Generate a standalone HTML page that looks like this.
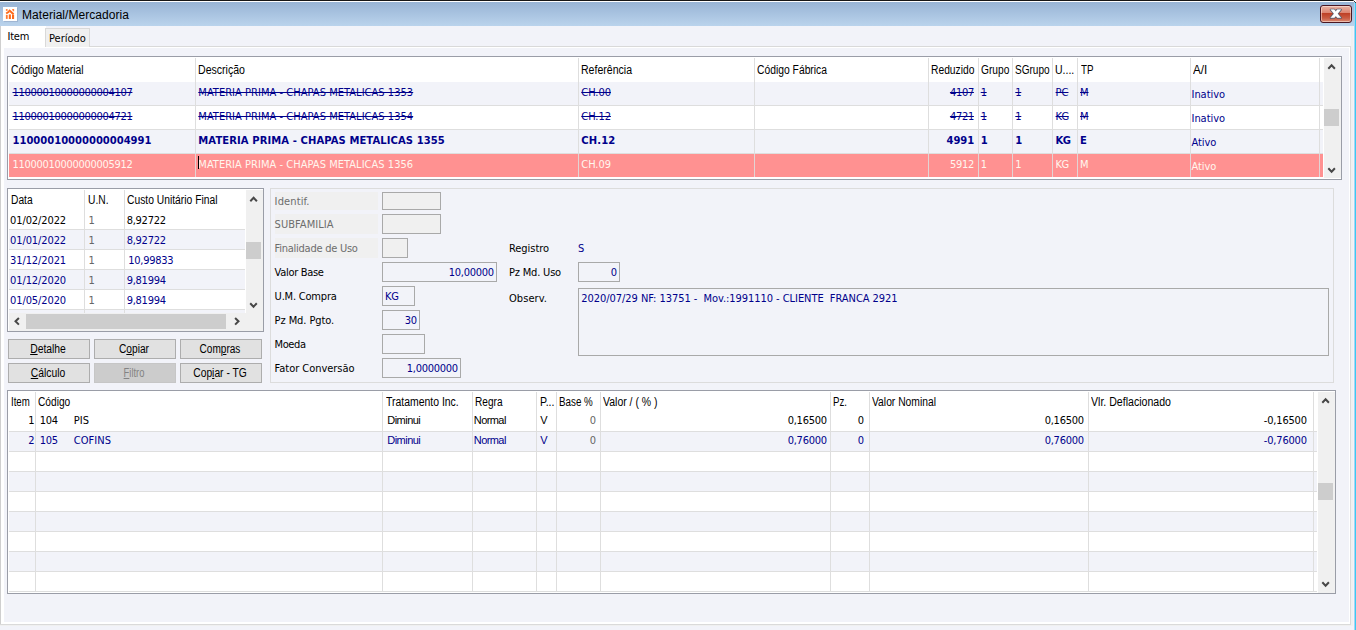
<!DOCTYPE html>
<html><head><meta charset="utf-8"><title>Material/Mercadoria</title><style>
html,body{margin:0;padding:0;background:#f2f3f9;}
#w{position:relative;width:1356px;height:630px;overflow:hidden;background:#f2f3f9;font-family:"Liberation Sans",sans-serif;font-size:11px;}
#w div,#w span,#w svg{position:absolute;}
#w span u{position:static;}
.t{white-space:nowrap;line-height:12px;}
.fh{font-family:"Liberation Sans",sans-serif;font-size:12px;}
.fd{font-family:"DejaVu Sans Condensed","Liberation Sans",sans-serif;font-size:11px;}
.fb{font-family:"DejaVu Sans","Liberation Sans",sans-serif;font-size:10px;font-weight:bold;}
.fc{font-family:"Liberation Sans",sans-serif;font-size:11px;}
.ft{font-family:"Liberation Sans",sans-serif;font-size:12px;line-height:14px;}
.s{text-decoration:line-through;}
</style></head><body><div id="w">
<div style="left:0px;top:0px;width:1353px;height:1px;background:#161616;"></div>
<div style="left:1353px;top:0px;width:1px;height:1px;background:#6a6a6a;"></div>
<div style="left:1354px;top:1px;width:1px;height:1px;background:#3a3a3a;"></div>
<div style="left:1355px;top:2px;width:1px;height:1px;background:#3a3a3a;"></div>
<div style="left:1354px;top:0px;width:2px;height:1px;background:#fff;"></div>
<div style="left:1355px;top:1px;width:1px;height:1px;background:#fff;"></div>
<div style="left:0px;top:1px;width:1354px;height:1px;background:#ffffff;"></div>
<div style="left:0px;top:2px;width:1354px;height:24px;background:linear-gradient(#98b4d5,#bad3ec);"></div>
<div style="left:0px;top:26px;width:1px;height:599px;background:#cfcfcf;"></div>
<div style="left:1px;top:26px;width:3px;height:598px;background:#ffffff;"></div>
<div style="left:1px;top:622px;width:1349px;height:2px;background:#ffffff;"></div>
<div style="left:0px;top:624px;width:1351px;height:1px;background:#dadada;"></div>
<div style="left:0px;top:625px;width:1353px;height:1px;background:#f0f0f0;"></div>
<div style="left:1351px;top:26px;width:2px;height:600px;background:#f0f0f0;"></div>
<div style="left:1349px;top:48px;width:1px;height:576px;background:#ffffff;"></div>
<div style="left:1350px;top:46px;width:1px;height:579px;background:#dadada;"></div>
<div style="left:1354px;top:2px;width:1px;height:628px;background:#a4d4f2;"></div>
<div style="left:1355px;top:3px;width:1px;height:627px;background:#38cbf3;"></div>
<div style="left:1px;top:46px;width:1350px;height:1px;background:#d9d9d9;"></div>
<div style="left:1px;top:47px;width:1349px;height:1px;background:#ffffff;"></div>
<div style="left:2.8px;top:6.5px;width:14.4px;height:14.5px;background:#ffffff;box-shadow:0.5px 0.5px 0.5px rgba(140,160,190,.5);"></div>
<svg style="left:0px;top:0px" width="24" height="26" viewBox="0 0 24 26"><g fill="#ff6a1a"><rect x="5.9" y="9" width="1.7" height="1.9" opacity=".8"/><polygon points="12,9 14.1,9 14.1,11.2 13,11.2" opacity=".85"/><rect x="5.9" y="14.9" width="1.8" height="4" opacity=".9"/><rect x="8.8" y="14.4" width="2.1" height="4.6"/><rect x="12" y="14.6" width="2.1" height="4.4"/></g><g stroke="#ff6a1a" fill="none"><path d="M8.9,10.1 L13.6,14.2" stroke-width="2"/><path d="M6.2,13.6 L9.2,11.4" stroke-width="1.9"/></g></svg>
<span class="t ft " style="top:8px;color:#000;letter-spacing:0.05px;left:22px;">Material/Mercadoria</span>
<div style="left:1320px;top:5px;width:32px;height:18px;box-sizing:border-box;border:1px solid #4a1622;border-radius:3px;background:linear-gradient(#eab3a4 0%,#dc8470 44%,#bd3f25 45%,#c95b42 75%,#d98a74 100%);box-shadow:inset 0 0 0 1px rgba(255,235,225,.55)"></div>
<svg style="left:1320px;top:5px" width="32" height="18" viewBox="0 0 32 18"><polygon points="10.60,4.60 14.30,4.60 15.80,6.44 17.30,4.60 21.00,4.60 17.65,8.70 21.00,12.80 17.30,12.80 15.80,10.96 14.30,12.80 10.60,12.80 13.95,8.70" fill="#4c5264" stroke="#4c5264" stroke-width="1.7" stroke-linejoin="round"/><polygon points="10.60,4.60 14.30,4.60 15.80,6.44 17.30,4.60 21.00,4.60 17.65,8.70 21.00,12.80 17.30,12.80 15.80,10.96 14.30,12.80 10.60,12.80 13.95,8.70" fill="#fff" stroke="#fff" stroke-width="0.3"/></svg>
<div style="left:1px;top:26px;width:45px;height:22px;background:#ffffff;"></div>
<span class="t fd " style="top:31px;color:#000;letter-spacing:-0.26px;left:7.6px;">Item</span>
<div style="left:45px;top:28px;width:45px;height:19px;box-sizing:border-box;border:1px solid #d9d9d9;border-bottom:none;background:#f0f0f0"></div>
<span class="t fd " style="top:33px;color:#000;left:49px;">Período</span>
<div style="left:7px;top:56px;width:1335px;height:124px;box-sizing:border-box;border:1px solid #9a9da7;background:#fff"></div>
<div style="left:9px;top:82px;width:1314px;height:23px;background:#f2f3f9;"></div>
<div style="left:9px;top:105px;width:1314px;height:1px;background:#dedede;"></div>
<div style="left:9px;top:106px;width:1314px;height:23px;background:#fff;"></div>
<div style="left:9px;top:129px;width:1314px;height:1px;background:#dedede;"></div>
<div style="left:9px;top:130px;width:1314px;height:23px;background:#f2f3f9;"></div>
<div style="left:9px;top:153px;width:1314px;height:1px;background:#dedede;"></div>
<div style="left:195px;top:58px;width:1px;height:119px;background:#dedede;"></div>
<div style="left:578px;top:58px;width:1px;height:119px;background:#dedede;"></div>
<div style="left:754px;top:58px;width:1px;height:119px;background:#dedede;"></div>
<div style="left:928px;top:58px;width:1px;height:119px;background:#dedede;"></div>
<div style="left:978px;top:58px;width:1px;height:119px;background:#dedede;"></div>
<div style="left:1012px;top:58px;width:1px;height:119px;background:#dedede;"></div>
<div style="left:1052px;top:58px;width:1px;height:119px;background:#dedede;"></div>
<div style="left:1077px;top:58px;width:1px;height:119px;background:#dedede;"></div>
<div style="left:1190px;top:58px;width:1px;height:119px;background:#dedede;"></div>
<div style="left:1319px;top:58px;width:1px;height:119px;background:#dedede;"></div>
<div style="left:9px;top:154px;width:1314px;height:23px;background:#ff9191;"></div>
<div style="left:195px;top:154px;width:1px;height:23px;background:#e2d4d4;"></div>
<div style="left:578px;top:154px;width:1px;height:23px;background:#e2d4d4;"></div>
<div style="left:754px;top:154px;width:1px;height:23px;background:#e2d4d4;"></div>
<div style="left:928px;top:154px;width:1px;height:23px;background:#e2d4d4;"></div>
<div style="left:978px;top:154px;width:1px;height:23px;background:#e2d4d4;"></div>
<div style="left:1012px;top:154px;width:1px;height:23px;background:#e2d4d4;"></div>
<div style="left:1052px;top:154px;width:1px;height:23px;background:#e2d4d4;"></div>
<div style="left:1077px;top:154px;width:1px;height:23px;background:#e2d4d4;"></div>
<div style="left:1190px;top:154px;width:1px;height:23px;background:#e2d4d4;"></div>
<div style="left:1319px;top:154px;width:1px;height:23px;background:#e2d4d4;"></div>
<div style="left:1324px;top:58px;width:17px;height:120px;background:#f0f0f0;"></div>
<div style="left:1324px;top:109px;width:15px;height:17px;background:#cdcdcd;"></div>
<span class="t fh " style="top:64px;color:#000;left:10.5px;transform:scaleX(0.8626);transform-origin:0 0;">Código Material</span>
<span class="t fh " style="top:64px;color:#000;left:198px;transform:scaleX(0.8808);transform-origin:0 0;">Descrição</span>
<span class="t fh " style="top:64px;color:#000;left:581.3px;transform:scaleX(0.8788);transform-origin:0 0;">Referência</span>
<span class="t fh " style="top:64px;color:#000;left:756.7px;transform:scaleX(0.8602);transform-origin:0 0;">Código Fábrica</span>
<span class="t fh " style="top:64px;color:#000;left:931.3px;transform:scaleX(0.856);transform-origin:0 0;">Reduzido</span>
<span class="t fh " style="top:64px;color:#000;left:980.7px;transform:scaleX(0.8483);transform-origin:0 0;">Grupo</span>
<span class="t fh " style="top:64px;color:#000;left:1015.3px;transform:scaleX(0.8366);transform-origin:0 0;">SGrupo</span>
<span class="t fh " style="top:64px;color:#000;left:1055.4px;transform:scaleX(0.8767);transform-origin:0 0;">U....</span>
<span class="t fh " style="top:64px;color:#000;left:1080.5px;transform:scaleX(0.8147);transform-origin:0 0;">TP</span>
<span class="t fh " style="top:64px;color:#000;left:1192.7px;transform:scaleX(0.9747);transform-origin:0 0;">A/I</span>
<span class="t fd s" style="top:87px;color:#00008b;letter-spacing:-0.3px;left:12.5px;">11000010000000004107</span>
<span class="t fd s" style="top:87px;color:#00008b;letter-spacing:0.04px;left:198.3px;">MATERIA PRIMA - CHAPAS METALICAS 1353</span>
<span class="t fd s" style="top:87px;color:#00008b;letter-spacing:-0.06px;left:581.3px;">CH.00</span>
<span class="t fd s" style="top:87px;color:#00008b;letter-spacing:-0.3px;right:382.1px;">4107</span>
<span class="t fd s" style="top:87px;color:#00008b;letter-spacing:-0.3px;left:980.7px;">1</span>
<span class="t fd s" style="top:87px;color:#00008b;letter-spacing:-0.3px;left:1015.3px;">1</span>
<span class="t fd s" style="top:87px;color:#00008b;left:1055.6px;">PC</span>
<span class="t fd s" style="top:87px;color:#00008b;left:1080px;">M</span>
<span class="t fd " style="top:89px;color:#00008b;letter-spacing:-0.04px;left:1191.5px;">Inativo</span>
<span class="t fd s" style="top:111px;color:#00008b;letter-spacing:-0.3px;left:12.5px;">11000010000000004721</span>
<span class="t fd s" style="top:111px;color:#00008b;letter-spacing:0.04px;left:198.3px;">MATERIA PRIMA - CHAPAS METALICAS 1354</span>
<span class="t fd s" style="top:111px;color:#00008b;letter-spacing:-0.06px;left:581.3px;">CH.12</span>
<span class="t fd s" style="top:111px;color:#00008b;letter-spacing:-0.3px;right:382.1px;">4721</span>
<span class="t fd s" style="top:111px;color:#00008b;letter-spacing:-0.3px;left:980.7px;">1</span>
<span class="t fd s" style="top:111px;color:#00008b;letter-spacing:-0.3px;left:1015.3px;">1</span>
<span class="t fd s" style="top:111px;color:#00008b;letter-spacing:-0.64px;left:1055.6px;">KG</span>
<span class="t fd s" style="top:111px;color:#00008b;left:1080px;">M</span>
<span class="t fd " style="top:113px;color:#00008b;letter-spacing:-0.04px;left:1191.5px;">Inativo</span>
<span class="t fb " style="top:135px;color:#00008b;letter-spacing:-0.01px;left:12.5px;">11000010000000004991</span>
<span class="t fb " style="top:135px;color:#00008b;letter-spacing:0.09px;left:198.3px;">MATERIA PRIMA - CHAPAS METALICAS 1355</span>
<span class="t fb " style="top:135px;color:#00008b;letter-spacing:0.11px;left:581.3px;">CH.12</span>
<span class="t fb " style="top:135px;color:#00008b;letter-spacing:-0.06px;right:381.86px;">4991</span>
<span class="t fb " style="top:135px;color:#00008b;left:980.7px;">1</span>
<span class="t fb " style="top:135px;color:#00008b;left:1015.3px;">1</span>
<span class="t fb " style="top:135px;color:#00008b;letter-spacing:-0.48px;left:1055.6px;">KG</span>
<span class="t fb " style="top:135px;color:#00008b;left:1080px;">E</span>
<span class="t fd " style="top:137px;color:#00008b;letter-spacing:-0.06px;left:1191.5px;">Ativo</span>
<span class="t fd " style="top:159px;color:#fff6ee;letter-spacing:-0.3px;left:12.5px;">11000010000000005912</span>
<span class="t fd " style="top:159px;color:#fff6ee;letter-spacing:0.04px;left:198.3px;">MATERIA PRIMA - CHAPAS METALICAS 1356</span>
<span class="t fd " style="top:159px;color:#fff6ee;letter-spacing:-0.06px;left:581.3px;">CH.09</span>
<span class="t fd " style="top:159px;color:#fff6ee;letter-spacing:-0.3px;right:382.1px;">5912</span>
<span class="t fd " style="top:159px;color:#fff6ee;letter-spacing:-0.3px;left:980.7px;">1</span>
<span class="t fd " style="top:159px;color:#fff6ee;letter-spacing:-0.3px;left:1015.3px;">1</span>
<span class="t fd " style="top:159px;color:#fff6ee;letter-spacing:-0.64px;left:1055.6px;">KG</span>
<span class="t fd " style="top:159px;color:#fff6ee;left:1080px;">M</span>
<span class="t fd " style="top:161px;color:#fff6ee;letter-spacing:-0.06px;left:1191.5px;">Ativo</span>
<div style="left:198px;top:156px;width:1px;height:13px;background:#000;"></div>
<div style="left:7px;top:188px;width:257px;height:144px;box-sizing:border-box;border:1px solid #9a9da7;background:#fff"></div>
<div style="left:9px;top:210px;width:236px;height:19px;background:#fff;"></div>
<div style="left:9px;top:229px;width:236px;height:1px;background:#dedede;"></div>
<div style="left:9px;top:230px;width:236px;height:19px;background:#f2f3f9;"></div>
<div style="left:9px;top:249px;width:236px;height:1px;background:#dedede;"></div>
<div style="left:9px;top:250px;width:236px;height:19px;background:#fff;"></div>
<div style="left:9px;top:269px;width:236px;height:1px;background:#dedede;"></div>
<div style="left:9px;top:270px;width:236px;height:19px;background:#f2f3f9;"></div>
<div style="left:9px;top:289px;width:236px;height:1px;background:#dedede;"></div>
<div style="left:9px;top:290px;width:236px;height:19px;background:#fff;"></div>
<div style="left:9px;top:309px;width:236px;height:1px;background:#dedede;"></div>
<div style="left:9px;top:310px;width:236px;height:19px;background:#f2f3f9;"></div>
<div style="left:9px;top:329px;width:236px;height:1px;background:#dedede;"></div>
<div style="left:84px;top:190px;width:1px;height:139px;background:#dedede;"></div>
<div style="left:124px;top:190px;width:1px;height:139px;background:#dedede;"></div>
<div style="left:246px;top:190px;width:17px;height:141px;background:#f0f0f0;"></div>
<div style="left:9px;top:313px;width:237px;height:18px;background:#f0f0f0;"></div>
<div style="left:246px;top:242px;width:15px;height:17px;background:#cdcdcd;"></div>
<div style="left:26px;top:314px;width:200px;height:15px;background:#cdcdcd;"></div>
<span class="t fh " style="top:194px;color:#000;left:11.2px;transform:scaleX(0.8518);transform-origin:0 0;">Data</span>
<span class="t fh " style="top:194px;color:#000;left:87.8px;transform:scaleX(0.8542);transform-origin:0 0;">U.N.</span>
<span class="t fh " style="top:194px;color:#000;left:126.7px;transform:scaleX(0.8588);transform-origin:0 0;">Custo Unitário Final</span>
<span class="t fd " style="top:215px;color:#000;letter-spacing:-0.1px;left:10px;">01/02/2022</span>
<span class="t fd " style="top:215px;color:#666;letter-spacing:-0.3px;left:88.5px;">1</span>
<span class="t fd " style="top:215px;color:#000;letter-spacing:-0.27px;left:126.7px;">8,92722</span>
<span class="t fd " style="top:235px;color:#00008b;letter-spacing:-0.1px;left:10px;">01/01/2022</span>
<span class="t fd " style="top:235px;color:#666;letter-spacing:-0.3px;left:88.5px;">1</span>
<span class="t fd " style="top:235px;color:#00008b;letter-spacing:-0.27px;left:126.7px;">8,92722</span>
<span class="t fd " style="top:255px;color:#00008b;letter-spacing:-0.1px;left:10px;">31/12/2021</span>
<span class="t fd " style="top:255px;color:#666;letter-spacing:-0.3px;left:88.5px;">1</span>
<span class="t fd " style="top:255px;color:#00008b;letter-spacing:-0.28px;left:128.3px;">10,99833</span>
<span class="t fd " style="top:275px;color:#00008b;letter-spacing:-0.1px;left:10px;">01/12/2020</span>
<span class="t fd " style="top:275px;color:#666;letter-spacing:-0.3px;left:88.5px;">1</span>
<span class="t fd " style="top:275px;color:#00008b;letter-spacing:-0.27px;left:126.7px;">9,81994</span>
<span class="t fd " style="top:295px;color:#00008b;letter-spacing:-0.1px;left:10px;">01/05/2020</span>
<span class="t fd " style="top:295px;color:#666;letter-spacing:-0.3px;left:88.5px;">1</span>
<span class="t fd " style="top:295px;color:#00008b;letter-spacing:-0.27px;left:126.7px;">9,81994</span>
<div style="left:8px;top:339px;width:82px;height:20px;box-sizing:border-box;border:1px solid #adadad;background:#e1e1e1"></div>
<span class="t fh " style="top:343px;color:#000;left:-12.200000000000003px;width:120px;text-align:center;transform:scaleX(0.8628);transform-origin:50% 0;"><u>D</u>etalhe</span>
<div style="left:94px;top:339px;width:82px;height:20px;box-sizing:border-box;border:1px solid #adadad;background:#e1e1e1"></div>
<span class="t fh " style="top:343px;color:#000;left:73.80000000000001px;width:120px;text-align:center;transform:scaleX(0.8484);transform-origin:50% 0;">C<u>o</u>piar</span>
<div style="left:180px;top:339px;width:82px;height:20px;box-sizing:border-box;border:1px solid #adadad;background:#e1e1e1"></div>
<span class="t fh " style="top:343px;color:#000;left:159.8px;width:120px;text-align:center;transform:scaleX(0.838);transform-origin:50% 0;">Com<u>p</u>ras</span>
<div style="left:8px;top:363px;width:82px;height:20px;box-sizing:border-box;border:1px solid #adadad;background:#e1e1e1"></div>
<span class="t fh " style="top:367px;color:#000;left:-12.200000000000003px;width:120px;text-align:center;transform:scaleX(0.8618);transform-origin:50% 0;"><u>C</u>álculo</span>
<div style="left:94px;top:363px;width:82px;height:20px;box-sizing:border-box;border:1px solid #c6c6c6;background:#cccccc"></div>
<span class="t fh " style="top:367px;color:#838383;left:73.80000000000001px;width:120px;text-align:center;transform:scaleX(0.7798);transform-origin:50% 0;"><u>F</u>iltro</span>
<div style="left:180px;top:363px;width:82px;height:20px;box-sizing:border-box;border:1px solid #adadad;background:#e1e1e1"></div>
<span class="t fh " style="top:367px;color:#000;left:159.8px;width:120px;text-align:center;transform:scaleX(0.8564);transform-origin:50% 0;">Cop<u>i</u>ar - TG</span>
<div style="left:270px;top:188px;width:1064px;height:195px;box-sizing:border-box;border:1px solid #dcdcdc"></div>
<div style="left:275px;top:192px;width:103px;height:18px;background:#f0f0f0;"></div>
<div style="left:275px;top:214px;width:103px;height:20px;background:#f0f0f0;"></div>
<div style="left:275px;top:238px;width:103px;height:20px;background:#f0f0f0;"></div>
<span class="t fd " style="top:196px;color:#6d6d6d;letter-spacing:0.12px;left:274.6px;">Identif.</span>
<div style="left:382px;top:192px;width:59px;height:18px;box-sizing:border-box;border:1px solid #a9a9a9;background:#f0f0f0"></div>
<span class="t fd " style="top:219px;color:#6d6d6d;letter-spacing:0.06px;left:274.6px;">SUBFAMILIA</span>
<div style="left:382px;top:214px;width:59px;height:20px;box-sizing:border-box;border:1px solid #a9a9a9;background:#f0f0f0"></div>
<span class="t fd " style="top:243px;color:#6d6d6d;letter-spacing:-0.25px;left:274.6px;">Finalidade de Uso</span>
<div style="left:382px;top:238px;width:26px;height:20px;box-sizing:border-box;border:1px solid #a9a9a9;background:#f0f0f0"></div>
<span class="t fd " style="top:267px;color:#000;letter-spacing:-0.31px;left:274.6px;">Valor Base</span>
<div style="left:382px;top:262px;width:115px;height:20px;box-sizing:border-box;border:1px solid #a9a9a9;background:#f2f3f9"></div>
<span class="t fd " style="top:267px;color:#00008b;letter-spacing:-0.28px;right:862.28px;">10,00000</span>
<span class="t fd " style="top:291px;color:#000;letter-spacing:-0.2px;left:274.6px;">U.M. Compra</span>
<div style="left:382px;top:286px;width:33px;height:20px;box-sizing:border-box;border:1px solid #a9a9a9;background:#f2f3f9"></div>
<span class="t fd " style="top:291px;color:#00008b;letter-spacing:-0.34px;left:385px;">KG</span>
<span class="t fd " style="top:315px;color:#000;letter-spacing:-0.09px;left:274.6px;">Pz Md. Pgto.</span>
<div style="left:382px;top:310px;width:38px;height:20px;box-sizing:border-box;border:1px solid #a9a9a9;background:#f2f3f9"></div>
<span class="t fd " style="top:315px;color:#00008b;letter-spacing:-0.3px;right:939.3px;">30</span>
<span class="t fd " style="top:339px;color:#000;letter-spacing:-0.41px;left:274.6px;">Moeda</span>
<div style="left:382px;top:334px;width:43px;height:20px;box-sizing:border-box;border:1px solid #a9a9a9;background:#f2f3f9"></div>
<span class="t fd " style="top:363px;color:#000;letter-spacing:-0.03px;left:274.6px;">Fator Conversão</span>
<div style="left:382px;top:358px;width:79px;height:20px;box-sizing:border-box;border:1px solid #a9a9a9;background:#f2f3f9"></div>
<span class="t fd " style="top:363px;color:#00008b;letter-spacing:-0.28px;right:898.28px;">1,0000000</span>
<span class="t fd " style="top:243px;color:#000;letter-spacing:-0.05px;left:509px;">Registro</span>
<span class="t fd " style="top:243px;color:#00008b;left:578px;">S</span>
<span class="t fd " style="top:267px;color:#000;letter-spacing:-0.19px;left:509px;">Pz Md. Uso</span>
<div style="left:578px;top:262px;width:42px;height:20px;box-sizing:border-box;border:1px solid #a9a9a9;background:#f2f3f9"></div>
<span class="t fd " style="top:267px;color:#00008b;letter-spacing:-0.3px;right:739.3px;">0</span>
<span class="t fd " style="top:293px;color:#000;letter-spacing:0.07px;left:509px;">Observ.</span>
<div style="left:578px;top:288px;width:751px;height:68px;box-sizing:border-box;border:1px solid #a9a9a9;background:#f2f3f9"></div>
<span class="t fd " style="top:293px;color:#00008b;letter-spacing:-0.05px;left:581.3px;white-space:pre;">2020/07/29 NF: 13751 -  Mov.:1991110 - CLIENTE  FRANCA 2921</span>
<div style="left:7px;top:390px;width:1329px;height:204px;box-sizing:border-box;border:1px solid #9a9da7;background:#fff"></div>
<div style="left:9px;top:412px;width:1308px;height:19px;background:#fff;"></div>
<div style="left:9px;top:431px;width:1308px;height:1px;background:#dedede;"></div>
<div style="left:9px;top:432px;width:1308px;height:19px;background:#f2f3f9;"></div>
<div style="left:9px;top:451px;width:1308px;height:1px;background:#dedede;"></div>
<div style="left:9px;top:452px;width:1308px;height:19px;background:#fff;"></div>
<div style="left:9px;top:471px;width:1308px;height:1px;background:#dedede;"></div>
<div style="left:9px;top:472px;width:1308px;height:19px;background:#f2f3f9;"></div>
<div style="left:9px;top:491px;width:1308px;height:1px;background:#dedede;"></div>
<div style="left:9px;top:492px;width:1308px;height:19px;background:#fff;"></div>
<div style="left:9px;top:511px;width:1308px;height:1px;background:#dedede;"></div>
<div style="left:9px;top:512px;width:1308px;height:19px;background:#f2f3f9;"></div>
<div style="left:9px;top:531px;width:1308px;height:1px;background:#dedede;"></div>
<div style="left:9px;top:532px;width:1308px;height:19px;background:#fff;"></div>
<div style="left:9px;top:551px;width:1308px;height:1px;background:#dedede;"></div>
<div style="left:9px;top:552px;width:1308px;height:19px;background:#f2f3f9;"></div>
<div style="left:9px;top:571px;width:1308px;height:1px;background:#dedede;"></div>
<div style="left:9px;top:572px;width:1308px;height:19px;background:#fff;"></div>
<div style="left:9px;top:591px;width:1308px;height:1px;background:#dedede;"></div>
<div style="left:35px;top:392px;width:1px;height:199px;background:#dedede;"></div>
<div style="left:382px;top:392px;width:1px;height:199px;background:#dedede;"></div>
<div style="left:472px;top:392px;width:1px;height:199px;background:#dedede;"></div>
<div style="left:536px;top:392px;width:1px;height:199px;background:#dedede;"></div>
<div style="left:556px;top:392px;width:1px;height:199px;background:#dedede;"></div>
<div style="left:600px;top:392px;width:1px;height:199px;background:#dedede;"></div>
<div style="left:830px;top:392px;width:1px;height:199px;background:#dedede;"></div>
<div style="left:869px;top:392px;width:1px;height:199px;background:#dedede;"></div>
<div style="left:1088px;top:392px;width:1px;height:199px;background:#dedede;"></div>
<div style="left:1313px;top:392px;width:1px;height:199px;background:#dedede;"></div>
<div style="left:1318px;top:392px;width:17px;height:201px;background:#f0f0f0;"></div>
<div style="left:1318px;top:483px;width:15px;height:17px;background:#cdcdcd;"></div>
<span class="t fh " style="top:396px;color:#000;left:11.2px;transform:scaleX(0.8054);transform-origin:0 0;">Item</span>
<span class="t fh " style="top:396px;color:#000;left:37.8px;transform:scaleX(0.8467);transform-origin:0 0;">Código</span>
<span class="t fh " style="top:396px;color:#000;left:386.3px;transform:scaleX(0.8697);transform-origin:0 0;">Tratamento Inc.</span>
<span class="t fh " style="top:396px;color:#000;left:475.3px;transform:scaleX(0.8413);transform-origin:0 0;">Regra</span>
<span class="t fh " style="top:396px;color:#000;left:539.7px;transform:scaleX(0.8805);transform-origin:0 0;">P...</span>
<span class="t fh " style="top:396px;color:#000;left:559.2px;transform:scaleX(0.8172);transform-origin:0 0;">Base %</span>
<span class="t fh " style="top:396px;color:#000;left:603px;transform:scaleX(0.874);transform-origin:0 0;">Valor / ( % )</span>
<span class="t fh " style="top:396px;color:#000;left:833.3px;transform:scaleX(0.8072);transform-origin:0 0;">Pz.</span>
<span class="t fh " style="top:396px;color:#000;left:872px;transform:scaleX(0.8592);transform-origin:0 0;">Valor Nominal</span>
<span class="t fh " style="top:396px;color:#000;left:1091px;transform:scaleX(0.8817);transform-origin:0 0;">Vlr. Deflacionado</span>
<span class="t fd " style="top:415px;color:#000;letter-spacing:-0.3px;right:1321.7px;">1</span>
<span class="t fd " style="top:415px;color:#000;letter-spacing:-0.3px;left:39.7px;">104</span>
<span class="t fd " style="top:415px;color:#000;letter-spacing:0.11px;left:73.7px;">PIS</span>
<span class="t fc " style="top:414px;color:#000;letter-spacing:-0.53px;left:387.3px;">Diminui</span>
<span class="t fc " style="top:414px;color:#000;letter-spacing:-0.58px;left:473.8px;">Normal</span>
<span class="t fc " style="top:414px;color:#000;letter-spacing:-1.34px;left:540.2px;">V</span>
<span class="t fd " style="top:415px;color:#666;letter-spacing:-0.3px;right:760.3px;">0</span>
<span class="t fd " style="top:415px;color:#000;letter-spacing:-0.27px;right:529.27px;">0,16500</span>
<span class="t fd " style="top:415px;color:#000;letter-spacing:-0.3px;right:492.3px;">0</span>
<span class="t fd " style="top:415px;color:#000;letter-spacing:-0.27px;right:272.27px;">0,16500</span>
<span class="t fd " style="top:415px;color:#000;letter-spacing:-0.19px;right:49.19px;">-0,16500</span>
<span class="t fd " style="top:435px;color:#00008b;letter-spacing:-0.3px;right:1321.7px;">2</span>
<span class="t fd " style="top:435px;color:#00008b;letter-spacing:-0.3px;left:39.7px;">105</span>
<span class="t fd " style="top:435px;color:#00008b;letter-spacing:0.08px;left:73.7px;">COFINS</span>
<span class="t fc " style="top:434px;color:#00008b;letter-spacing:-0.53px;left:387.3px;">Diminui</span>
<span class="t fc " style="top:434px;color:#00008b;letter-spacing:-0.58px;left:473.8px;">Normal</span>
<span class="t fc " style="top:434px;color:#00008b;letter-spacing:-1.34px;left:540.2px;">V</span>
<span class="t fd " style="top:435px;color:#666;letter-spacing:-0.3px;right:760.3px;">0</span>
<span class="t fd " style="top:435px;color:#00008b;letter-spacing:-0.27px;right:529.27px;">0,76000</span>
<span class="t fd " style="top:435px;color:#00008b;letter-spacing:-0.3px;right:492.3px;">0</span>
<span class="t fd " style="top:435px;color:#00008b;letter-spacing:-0.27px;right:272.27px;">0,76000</span>
<span class="t fd " style="top:435px;color:#00008b;letter-spacing:-0.19px;right:49.19px;">-0,76000</span>
<svg style="left:0;top:0" width="1356" height="630" viewBox="0 0 1356 630">
<path d="M1328.3,68.7 L1331.6,65.3 L1334.8999999999999,68.7" fill="none" stroke="#474747" stroke-width="2"/>
<path d="M1328.3,168.3 L1331.6,171.7 L1334.8999999999999,168.3" fill="none" stroke="#474747" stroke-width="2"/>
<path d="M250.29999999999998,201.2 L253.6,197.8 L256.9,201.2" fill="none" stroke="#474747" stroke-width="2"/>
<path d="M250.2,303.3 L253.5,306.7 L256.8,303.3" fill="none" stroke="#474747" stroke-width="2"/>
<path d="M18.9,318.0 L15.5,321.3 L18.9,324.6" fill="none" stroke="#474747" stroke-width="2"/>
<path d="M235.10000000000002,318.0 L238.5,321.3 L235.10000000000002,324.6" fill="none" stroke="#474747" stroke-width="2"/>
<path d="M1322.3,402.7 L1325.6,399.3 L1328.8999999999999,402.7" fill="none" stroke="#474747" stroke-width="2"/>
<path d="M1322.3,582.3 L1325.6,585.7 L1328.8999999999999,582.3" fill="none" stroke="#474747" stroke-width="2"/>
</svg>
</div></body></html>
